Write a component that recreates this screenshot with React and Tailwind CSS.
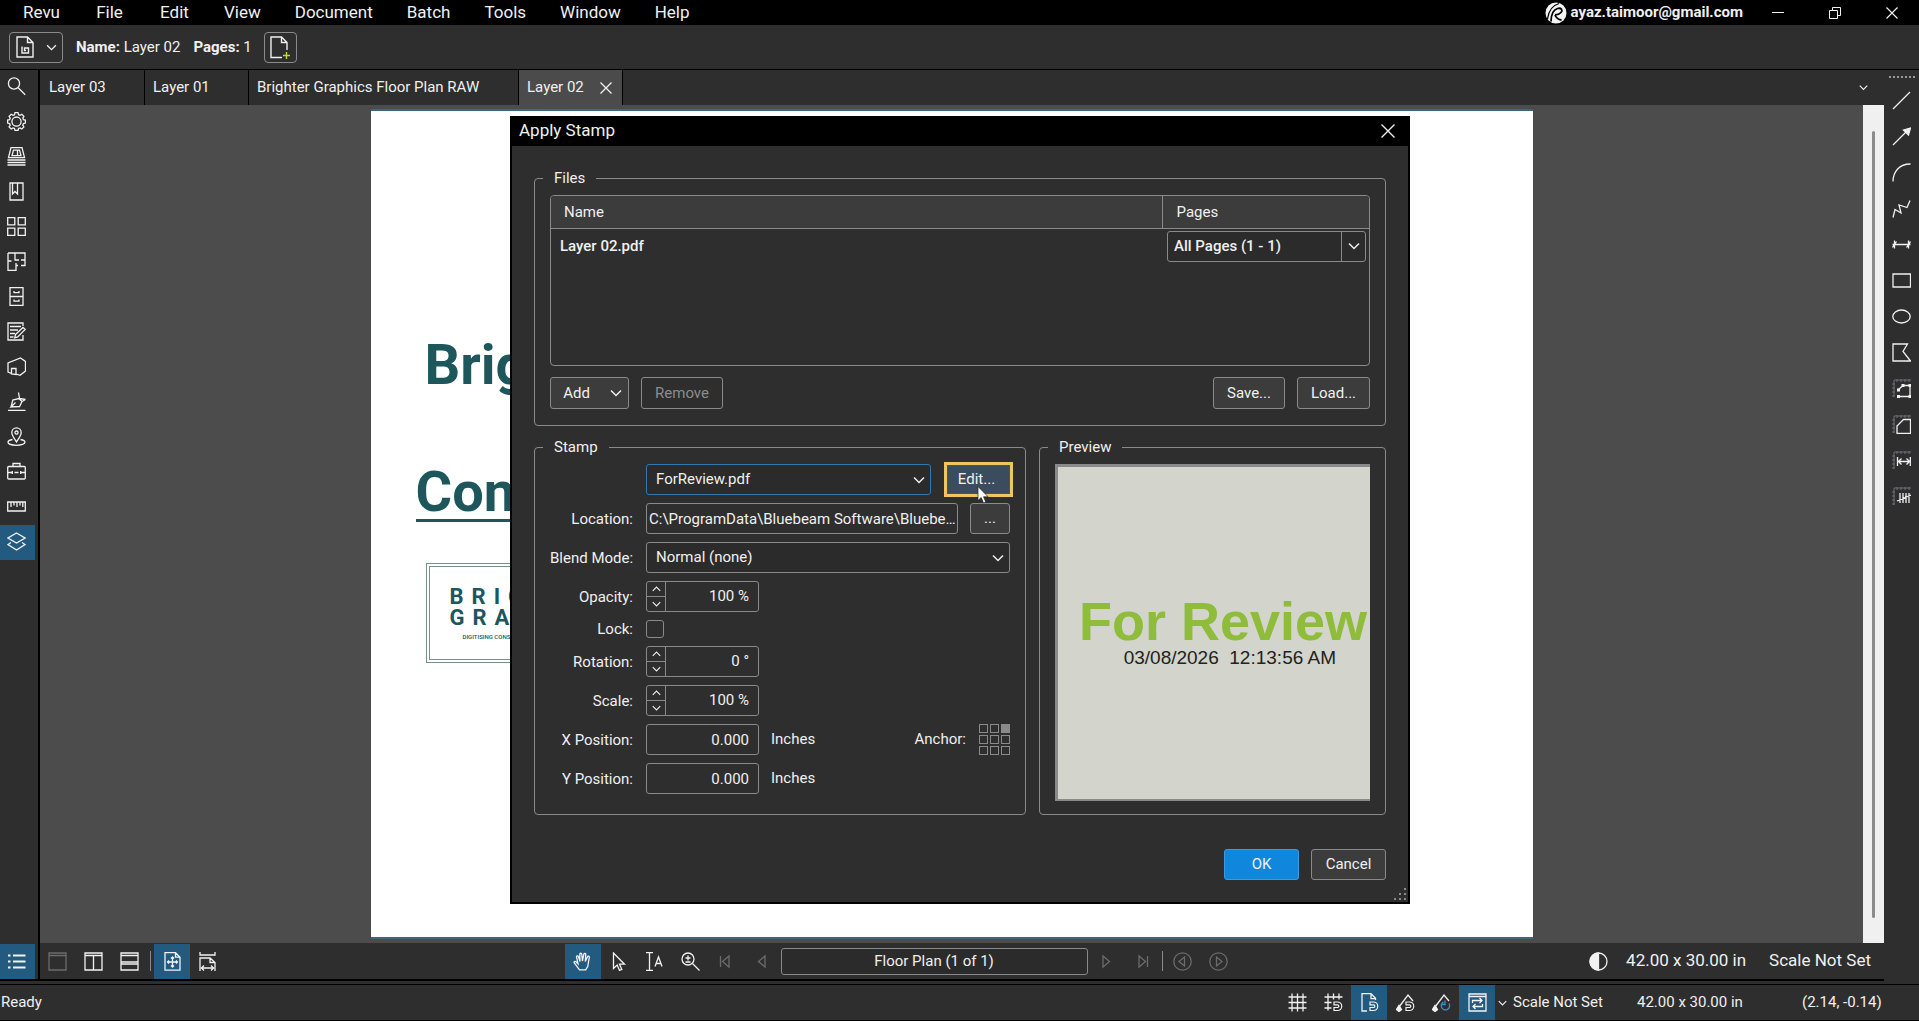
import clsx from 'clsx';
import { useState } from 'react';

const MENUS = ['Revu', 'File', 'Edit', 'View', 'Document', 'Batch', 'Tools', 'Window', 'Help'];

const Icon = ({ children, className = '' }) => (
  <svg
    viewBox="0 0 19 19"
    className={clsx('h-[19px] w-[19px] shrink-0', className)}
    fill="none"
    stroke="currentColor"
    strokeWidth="1.3"
    aria-hidden="true"
  >
    {children}
  </svg>
);

const Chevron = ({ className = '', up = false }) => (
  <svg viewBox="0 0 12 8" className={clsx('shrink-0', className)} fill="none" stroke="currentColor" strokeWidth="1.5" aria-hidden="true">
    <path d={up ? 'M1 6.5 6 1.5l5 5' : 'M1 1.5 6 6.5l5-5'} />
  </svg>
);

const PANELS = [
  { name: 'Search', icon: <><circle cx="7" cy="6.5" r="5.6" /><path d="m11.2 10.7 7 7" /></> },
  {
    name: 'Properties',
    icon: (
      <>
        <path d="M8 .7h3l.5 2 1.5.6 1.8-1.1 2.1 2.1-1.1 1.8.6 1.5 2 .5v3l-2 .5-.6 1.5 1.1 1.8-2.1 2.1-1.8-1.1-1.5.6-.5 2H8l-.5-2-1.5-.6-1.8 1.1-2.1-2.1 1.1-1.8-.6-1.5-2-.5v-3l2-.5.6-1.5-1.1-1.8 2.1-2.1L6 3.3l1.5-.6z" />
        <circle cx="9.5" cy="9.6" r="4.6" />
      </>
    ),
  },
  { name: 'File Access', icon: <><path d="M4 .7h11l2.5 10h-16zM6.5 3.2h6l1.5 5.5H5zM10.5 3.5v5M.5 13h18M.5 15.5h18M.5 18h18" /></> },
  { name: 'Bookmarks', icon: <><path d="M3 1h13v17H3zM5.5 1v11L8 9.5l2.5 2.5V1" /></> },
  { name: 'Thumbnails', icon: <><path d="M.7.7h7.1v7.1H.7zM11.2.7h7.1v7.1h-7.1zM.7 11.2h7.1v7.1H.7zM11.2 11.2h7.1v7.1h-7.1z" /></> },
  { name: 'Spaces', icon: <><path d="M1 1h17v12.5h-4M8 1v7h4M1 9h3.5M1 1v17.5h8v-5h2M9 11v2.5M14 8h4" /></> },
  { name: 'Sets', icon: <><path d="M3 .7h13v17.6H3zM3 9.5h13M7 4v1.7h5V4M7 12.5v1.7h5v-1.7" /></> },
  { name: 'Markups', icon: <><path d="M16 4V1H1v17h15v-5M3 4.5h11M3 8h8M3 11.5h5M3 15h3.5M8.5 12.5l7.5-7 2.2 2-7.5 7.5-3 .8z" /></> },
  { name: '3D Model Tree', icon: <><path d="M4.5 16.5 1 15V6l12.500-5 5 3.500V14l-5.500 4.300-4-1.300M4.500 17v-5.500h4.500v6z" /></> },
  { name: 'Signatures', icon: <><path d="M1 18.3h17.5M4 15l1.8-7 6-1.5 3.2 3-2.4 5-8.6.5 4.5-4.5M11.5.5l1 6M12.5 6.5l6 1M15 9.5l3.5-2" /></> },
  { name: 'Places', icon: <><path d="M9.5 15C7 11 4.8 8.6 4.8 5.6a4.7 4.7 0 0 1 9.4 0C14.2 8.6 12 11 9.5 15z" /><circle cx="9.5" cy="5.6" r="1.6" /><path d="M5.5 12.5C2.5 13 1 14 1 15.3 1 17 4.8 18.3 9.5 18.3S18 17 18 15.3c0-1.3-1.5-2.3-4.5-2.8" /></> },
  { name: 'Tool Chest', icon: <><rect x=".7" y="4.5" width="17.6" height="12.5" rx="1" /><path d="M6 4.5v-3h7v3M.7 10.5h4.5M7.5 10.5h4M13.8 10.5h4.5M5.3 9v3M13.7 9v3" /></> },
  { name: 'Measurements', icon: <><path d="M.7 5h17.6v9H.7zM4 5v5M7 5v3.5M10 5v5M13 5v3.5M15.8 5v5" /></> },
  { name: 'Layers', active: true, icon: <><path d="m9.5 1 8.5 5-8.5 5L1 6z" /><path d="m4 10.5-3 2L9.500 18l8.500-5.500-3-2" /></> },
];

const ruler = <path d="M2 1v17M2 1h17M5 0v3M9 0v3M13 0v3M17 0v3M0 5h3M0 9h3M0 13h3M0 17h3" stroke="#6e6c78" strokeWidth="1" />;

const DRAW_TOOLS = [
  { name: 'Line', icon: <path d="M1 18 18 1" /> },
  { name: 'Arrow', icon: <><path d="M1 18 14 5" /><path d="m18.5 1-2 7-5-5z" fill="currentColor" /></> },
  { name: 'Arc', icon: <path d="M1 18.5C1 9 7 1 18.5 1" /> },
  { name: 'Polyline', icon: <path d="m1 18.5 2-8 6 3.5-2-8 8 2.5 3-7" /> },
  { name: 'Dimension', icon: <path d="M2.5 5.5v8M16.5 5.5v8M.5 9.5h18M.5 12.5l4-6M14.5 12.5l4-6" /> },
  { name: 'Rectangle', icon: <path d="M1 3h17.5v13H1z" /> },
  { name: 'Ellipse', icon: <ellipse cx="9.5" cy="9.5" rx="8.7" ry="6.5" /> },
  { name: 'Polygon', icon: <path d="M1 1h14.5L11 8.5l7.5 9.5H1z" /> },
  {
    name: 'Perimeter',
    icon: (
      <>
        {ruler}
        <path d="m6 11 5-4.5h7v11H6" />
        <path d="M5 9.5h3v3H5zM9.5 5h3v3h-3zM16.5 5H19v3h-2.5zM5 16h3v3H5zM16.5 16H19v3h-2.5z" fill="currentColor" stroke="none" />
      </>
    ),
  },
  { name: 'Area', icon: <>{ruler}<path d="M5 18.3V11l6.5-6.5h7v13.8z" /></> },
  { name: 'Length', icon: <>{ruler}<path d="M5.5 6v9M18.3 6v9M6.5 10.5h11M9.5 7.5l-3 3 3 3M14.5 7.5l3 3-3 3" /></> },
  { name: 'Count', icon: <>{ruler}<path d="M8 6v10M11 6v10M14 6v10M17 6v10M5 14l14-6" /></> },
];

const magnet = <path d="M10 9h3.5a4 4 0 0 1 0 8.5H10v-3h3.5a1.3 1.3 0 0 0 0-2.6H10z" strokeWidth="1.2" />;

const triangle = {
  left: 'M12 4v11L5.5 9.5z',
  right: 'M7 4v11l6.5-5.5z',
};

const BarButton = ({ label, active, dim, children, className = 'w-9' }) => (
  <button
    type="button"
    aria-label={label}
    className={clsx(
      'flex h-[35px] shrink-0 items-center justify-center',
      active && 'bg-[#235a80]',
      dim ? 'text-[#6b6b6b]' : 'text-[#f2f2f2]',
      className
    )}
  >
    <Icon>{children}</Icon>
  </button>
);

const BUTTON_TONES = {
  normal: 'rounded-[3px] border-[#8a8a8a] bg-[#3c3c3c] disabled:bg-transparent disabled:text-[#8c8c8c]',
  primary: 'rounded-[3px] border-[#3c9be0] bg-[#0f87dc]',
  highlighted: 'border-[#3f566b] bg-[#3a4c5e] ring-3 ring-[#eec660]',
};

const Button = ({ children, tone = 'normal', className = '', ...props }) => (
  <button type="button" className={clsx('flex items-center justify-center border', BUTTON_TONES[tone], className)} {...props}>
    {children}
  </button>
);

const Select = ({ id, label, options, className = '', selectClass = '', split = false }) => (
  <div className={clsx('relative h-[31px]', className)}>
    <select
      id={id}
      aria-label={label}
      className={clsx('h-full w-full appearance-none rounded-[3px] border bg-[#2b2b2b] outline-none', selectClass)}
    >
      {options.map((option) => (
        <option key={option}>{option}</option>
      ))}
    </select>
    <span
      className={clsx(
        'pointer-events-none absolute inset-y-0 right-0 flex w-[25px] items-center justify-center',
        split && 'border-l border-[#8a8a8a]'
      )}
    >
      <Chevron className="h-2 w-3" />
    </span>
  </div>
);

const Spinner = ({ id, value }) => (
  <div className="flex h-[31px] w-[113px] overflow-hidden rounded-[3px] border border-[#8a8a8a]">
    <div className="flex w-[19px] shrink-0 flex-col border-r border-[#8a8a8a]">
      <button type="button" aria-label={`Increase ${id}`} className="flex flex-1 items-center justify-center border-b border-[#8a8a8a]">
        <Chevron up className="h-1.5 w-[9px]" />
      </button>
      <button type="button" aria-label={`Decrease ${id}`} className="flex flex-1 items-center justify-center">
        <Chevron className="h-1.5 w-[9px]" />
      </button>
    </div>
    <input id={id} type="text" defaultValue={value} className="w-full min-w-0 bg-transparent pr-[9px] text-right outline-none" />
  </div>
);

const Group = ({ title, children, className = '' }) => (
  <fieldset className={clsx('min-w-0 rounded-[4px] border border-[#8a8a8a] px-[15px] pt-[7px]', className)}>
    <legend className="-ml-[7px] px-[11px] leading-5">{title}</legend>
    {children}
  </fieldset>
);

const Row = ({ label, htmlFor, children }) => (
  <>
    <label htmlFor={htmlFor} className="self-center text-right leading-[18px] whitespace-nowrap">
      {label}
    </label>
    <div className="flex min-w-0 items-center">{children}</div>
  </>
);

const numberInput = 'h-[31px] w-[113px] rounded-[3px] border border-[#8a8a8a] bg-transparent pr-[9px] text-right outline-none';

const ApplyStampDialog = () => {
  const [anchor, setAnchor] = useState(2);

  return (
    <div className="fixed inset-0 flex items-center justify-center pb-px pl-px">
      <section
        role="dialog"
        aria-label="Apply Stamp"
        className="relative w-[900px] border-2 border-t-0 border-black bg-[#2e2e2e] text-[15px] text-[#f0f0f0]"
      >
        <header className="flex h-[30px] items-center justify-between bg-black pr-[13px] pl-[7px]">
          <h1 className="text-[17px]">Apply Stamp</h1>
          <button type="button" aria-label="Close dialog">
            <svg viewBox="0 0 14 14" className="h-3.5 w-3.5" stroke="currentColor" strokeWidth="1.4">
              <path d="m.5.5 13 13M13.5.5l-13 13" />
            </svg>
          </button>
        </header>

        <div className="px-[22px] pt-[22px] pb-[22px]">
          <Group title="Files" className="pb-4">
            <div className="h-[171px] overflow-hidden rounded-[4px] border border-[#8a8a8a]">
              <table className="w-full table-fixed border-collapse text-left">
                <thead>
                  <tr className="h-8 border-b border-[#8a8a8a] bg-[#3c3c3c]">
                    <th className="pl-[13px] font-normal">Name</th>
                    <th className="w-[207px] border-l border-[#8a8a8a] pl-[14px] font-normal">Pages</th>
                  </tr>
                </thead>
                <tbody>
                  <tr className="font-medium">
                    <td className="pt-0.5 pl-[9px]">Layer 02.pdf</td>
                    <td className="pt-0.5 pr-[3px] pl-[5px]">
                      <Select
                        label="Pages"
                        options={['All Pages (1 - 1)']}
                        split
                        selectClass="border-[#8a8a8a] pl-1.5"
                      />
                    </td>
                  </tr>
                </tbody>
              </table>
            </div>
            <div className="mt-[11px] flex h-8 gap-3">
              <Button className="w-[79px] gap-5 pl-1.5">
                Add
                <Chevron className="h-2 w-3" />
              </Button>
              <Button className="w-[82px]" disabled>Remove</Button>
              <Button className="ml-auto w-[72px]">Save...</Button>
              <Button className="w-[73px]">Load...</Button>
            </div>
          </Group>

          <div className="mt-[11px] flex gap-[13px]">
            <Group title="Stamp" className="flex-1 pb-5">
              <div className="grid grid-cols-[83px_minmax(0,1fr)] gap-x-[13px] gap-y-2">
                <Row label="" htmlFor="stamp">
                  <Select
                    id="stamp"
                    label="Stamp"
                    options={['ForReview.pdf']}
                    className="flex-1"
                    selectClass="border-[#2f79b0] pl-[9px]"
                  />
                  <div className="relative ml-4">
                    <Button tone="highlighted" className="h-[29px] w-[63px] pr-1">
                      Edit...
                    </Button>
                    <svg viewBox="0 0 12 18" className="pointer-events-none absolute top-[21px] left-[30px] h-[18px] w-3" fill="#fff" stroke="#222" strokeWidth=".7">
                      <path d="M1 .5v14l3.2-3 2.3 5.5 2.3-1-2.3-5.3H11z" />
                    </svg>
                  </div>
                </Row>
                <Row label="Location:" htmlFor="location">
                  <input
                    id="location"
                    type="text"
                    readOnly
                    value="C:\ProgramData\Bluebeam Software\Bluebe…"
                    className="h-[31px] min-w-0 flex-1 rounded-[3px] border border-[#8a8a8a] bg-transparent pl-0.5 outline-none"
                  />
                  <Button className="ml-3 h-[31px] w-10" aria-label="Browse">...</Button>
                </Row>
                <Row label="Blend Mode:" htmlFor="blend">
                  <Select id="blend" options={['Normal (none)']} className="flex-1" selectClass="border-[#8a8a8a] pl-[9px]" />
                </Row>
                <Row label="Opacity:" htmlFor="opacity">
                  <Spinner id="opacity" value="100 %" />
                </Row>
                <Row label="Lock:" htmlFor="lock">
                  <input id="lock" type="checkbox" className="h-[18px] w-[18px] appearance-none rounded-[3px] border border-[#8a8a8a] checked:bg-[#0f87dc]" />
                </Row>
                <Row label="Rotation:" htmlFor="rotation">
                  <Spinner id="rotation" value="0 °" />
                </Row>
                <Row label="Scale:" htmlFor="scale">
                  <Spinner id="scale" value="100 %" />
                </Row>
                <Row label="X Position:" htmlFor="x-position">
                  <input id="x-position" type="text" defaultValue="0.000" className={numberInput} />
                  <span className="ml-3">Inches</span>
                  <span className="ml-auto">Anchor:</span>
                  <div className="ml-[13px] grid grid-cols-3 gap-0.5">
                    {Array.from({ length: 9 }, (_, i) => (
                      <button
                        key={i}
                        type="button"
                        aria-label={`Anchor ${i + 1}`}
                        onClick={() => setAnchor(i)}
                        className={clsx('h-[9px] w-[9px] border border-[#8a8a8a]', anchor === i && 'bg-[#8a8a8a]')}
                      />
                    ))}
                  </div>
                </Row>
                <Row label="Y Position:" htmlFor="y-position">
                  <input id="y-position" type="text" defaultValue="0.000" className={numberInput} />
                  <span className="ml-3">Inches</span>
                </Row>
              </div>
            </Group>

            <Group title="Preview" className="w-[347px] pb-[13px]">
              <div className="flex h-[337px] flex-col items-end justify-center overflow-hidden border-t-3 border-b-2 border-l-3 border-[#8a8a8a] bg-[#d3d4cb] font-['Liberation_Sans',Arial,sans-serif] whitespace-nowrap">
                <p className="pr-[3px] text-[54px] leading-[50px] font-bold text-[#8fbc3b]">For Review</p>
                <p className="pr-[34px] text-[19px] leading-6 whitespace-pre text-[#222]">03/08/2026  12:13:56 AM</p>
              </div>
            </Group>
          </div>

          <div className="mt-[34px] flex h-[31px] justify-end gap-3">
            <Button tone="primary" className="w-[75px]">OK</Button>
            <Button className="w-[75px]">Cancel</Button>
          </div>
        </div>

        <svg viewBox="0 0 14 14" className="absolute right-px bottom-px h-3.5 w-3.5" fill="#8a8a8a" aria-hidden="true">
          <path d="M11 1h2v2h-2zM6 6h2v2H6zM11 6h2v2h-2zM1 11h2v2H1zM6 11h2v2H6zM11 11h2v2h-2z" />
        </svg>
      </section>
    </div>
  );
};

const TitleBar = () => (
  <header className="flex h-[25px] shrink-0 items-center justify-between bg-black">
    <nav className="flex pl-1.5 text-[17px]">
      {MENUS.map((menu) => (
        <button key={menu} type="button" className="min-w-[65px] px-[17px]">
          {menu}
        </button>
      ))}
    </nav>
    <div className="flex items-center text-[15px] font-bold">
      <svg viewBox="0 0 22 22" className="mr-1 h-[22px] w-[22px]" aria-hidden="true">
        <circle cx="11" cy="11" r="10.5" fill="#f4f4f4" />
        <path d="M2.5 17C3.5 9 7 3.5 14 1.5" fill="none" stroke="#000" strokeWidth="1.3" />
        <path d="M6 19.5C6 13 8 8 12.5 6.5c4-1 5.5 1.8 3.5 4-1.3 1.5-3.5 2.3-6 2.3" fill="none" stroke="#000" strokeWidth="1.8" />
        <path d="M10 13c1 2.5 3 4.5 6.5 5" fill="none" stroke="#000" strokeWidth="1.8" />
      </svg>
      <span>ayaz.taimoor@gmail.com</span>
      <button type="button" aria-label="Minimize" className="ml-7 p-px">
        <svg viewBox="0 0 12 12" className="h-3 w-3" stroke="currentColor"><path d="M0 5.5h12" /></svg>
      </button>
      <button type="button" aria-label="Restore" className="ml-[43px] p-px">
        <svg viewBox="0 0 12 12" className="h-3 w-3" stroke="currentColor" fill="none"><path d="M.5 3.5h8v8h-8zM3.5 3.5v-3h8v8h-3" /></svg>
      </button>
      <button type="button" aria-label="Close" className="mr-5 ml-[43px] p-px">
        <svg viewBox="0 0 12 12" className="h-3 w-3" stroke="currentColor" strokeWidth="1.2"><path d="m.5.5 11 11M11.5.5l-11 11" /></svg>
      </button>
    </div>
  </header>
);

const FileBar = () => (
  <div className="flex h-11 shrink-0 items-center pl-[9px] text-[15px]">
    <button type="button" aria-label="File" className="flex h-[31px] w-[54px] items-center justify-center gap-3 rounded-[4px] border border-[#8a8a8a]">
      <svg viewBox="0 0 18 22" className="h-[22px] w-[18px]" fill="none" stroke="currentColor" strokeWidth="1.4" aria-hidden="true">
        <path d="M1 1h10.5L17 6.5V21H1zM11.5 1v5.5H17M6 10.500V17h6.500v-5H8.500v2.500H10" />
      </svg>
      <Chevron className="h-[7px] w-[11px]" />
    </button>
    <span className="ml-[13px]"><b>Name:</b> Layer 02</span>
    <span className="ml-[13px]"><b>Pages:</b> 1</span>
    <button type="button" aria-label="Add page" className="ml-3 flex h-[31px] w-[33px] items-center justify-center rounded-[4px] border border-[#8a8a8a]">
      <svg viewBox="0 0 20 23" className="h-[23px] w-5" fill="none" stroke="currentColor" strokeWidth="1.4" aria-hidden="true">
        <path d="M12 21.5H1V1h10.5L17 6.5V14M11.5 1v5.5H17" />
        <path d="M16.5 16v7M13 19.5h7" stroke="#c5d92e" />
      </svg>
    </button>
  </div>
);

const PanelStrip = () => (
  <aside className="flex w-[40px] shrink-0 flex-col border-r-2 border-black">
    {PANELS.map(({ name, icon, active }) => (
      <BarButton key={name} label={name} active={active} className="w-[35px] pr-0.5 pb-0.5">{icon}</BarButton>
    ))}
    <BarButton label="Panel list" active className="mt-auto w-[35px] pr-0.5">
      <path d="M6 3.5h12.5M6 9.5h12.5M6 15.5h12.5" strokeWidth="2" />
      <path d="M1 3.5h2.5M1 9.5h2.5M1 15.5h2.5" strokeWidth="2" />
    </BarButton>
  </aside>
);

const Tabs = () => (
  <div className="flex h-[35px] shrink-0 items-stretch text-[15px]">
    <button type="button" className="w-[105px] border-r border-black pl-[9px] text-left">Layer 03</button>
    <button type="button" className="w-[104px] border-r border-black pl-2 text-left">Layer 01</button>
    <button type="button" className="w-[270px] border-r border-black pl-2 text-left">Brighter Graphics Floor Plan RAW</button>
    <div className="flex w-[104px] items-center justify-between border-r border-black bg-[#4b4b4b] pr-2.5 pl-2">
      <button type="button">Layer 02</button>
      <button type="button" aria-label="Close tab">
        <svg viewBox="0 0 12 12" className="h-3 w-3" stroke="currentColor" strokeWidth="1.3"><path d="m.5.5 11 11M11.5.5l-11 11" /></svg>
      </button>
    </div>
    <button type="button" aria-label="All tabs" className="mr-4 ml-auto">
      <Chevron className="h-[7px] w-[9px]" />
    </button>
  </div>
);

const LogoLine = ({ text }) => (
  <p className="flex gap-2 text-[22px] leading-[21px] font-bold">
    {text.split('').map((letter) => (
      <span key={letter}>{letter}</span>
    ))}
  </p>
);

const DrawingPage = () => (
  <div className="flex min-h-0 flex-1">
    <div className="flex flex-1 justify-center bg-[#4c4c4c] py-1">
      <article className="aspect-[7/5] h-full overflow-hidden border-y-2 border-[#41687a] bg-white pl-[45px] text-[#1d575c]">
        <h2 className="mt-[221px] pl-[9px] text-[56px] leading-[66px] font-bold">Brig</h2>
        <h2 className="mt-[68px] w-[400px] border-b-3 border-[#1d575c] text-[56px] leading-[53px] font-bold">Con</h2>
        <div className="mt-[41px] ml-[10px] w-[300px] border border-[#76908f] p-0.5">
          <div className="h-[94px] border border-[#76908f] pt-[19px] pl-5">
            <LogoLine text="BRIG" />
            <LogoLine text="GRAP" />
            <p className="mt-1.5 pl-[13px] text-[6px] leading-[6px] font-medium">DIGITISING CONS</p>
          </div>
        </div>
      </article>
    </div>
    <div className="flex w-[21px] justify-center bg-[#f0f0f0] pt-[26px] pb-[25px]">
      <div className="w-[3px] rounded-full bg-[#8c8c8c]" />
    </div>
  </div>
);

const NavBar = () => (
  <div className="flex h-9 shrink-0 items-center text-[17px]">
    <div className="flex items-center">
      <BarButton label="Single view" dim className="w-[35px]"><path d="M1 1h17v17H1zM1 3.5h17" /></BarButton>
      <BarButton label="Split vertical"><path d="M1 1h17v17H1zM1 3.5h17M9.5 3.5V18" /></BarButton>
      <BarButton label="Split horizontal"><path d="M1 1h17v17H1zM1 3.5h17M1 10h17M1 12h17" /></BarButton>
      <div className="mx-[3px] h-5 w-px bg-[#8a8a8a]" />
      <BarButton label="Fit page" active>
        <path d="M2 .7h10.5L17 5.2v13H2zM12.5.7v4.500H17M9.500 5v10M4.500 10h10M8 6.500 9.500 5 11 6.500M8 13.500 9.500 15l1.500-1.500M6 8.500 4.500 10 6 11.500M13 8.500l1.500 1.500-1.500 1.500" />
      </BarButton>
      <BarButton label="Fit width" className="w-[35px]">
        <path d="M2 0v3h15V0M2 19V6h10l5 4.5V19M12 6v4.5h5M3 16h13M6 13.5 3.5 16 6 18.5M13 13.5l2.5 2.5-2.5 2.5" />
      </BarButton>
    </div>
    <div className="flex flex-1 items-center justify-center pr-1">
      <BarButton label="Pan" active>
        <path d="M6.5 17.8 1.3 11c-.8-1.3.7-2.2 1.7-1.300l2 2L3.500 5c-.2-1.300 1.500-1.700 1.900-.4L7 9.500 6.800 2.300c0-1.400 1.900-1.400 2 0L9.400 9l1.500-6.800c.3-1.200 2-.9 1.900.3L12.300 9.500l2.200-4.800c.5-1 2-.5 1.800.7l-1.600 9.100-2 3.300z" />
      </BarButton>
      <BarButton label="Select"><path d="M4.5 1v15.5l3.7-3.4 2.3 5.3 2.3-1-2.3-5.2h5z" /></BarButton>
      <BarButton label="Select text">
        <path d="M1 .7h7M4.5.7v17.6M1 18.3h7M10 14.5 13.500 5 17 14.500M11.200 11.500h4.600" />
      </BarButton>
      <BarButton label="Zoom"><circle cx="7" cy="7" r="6" /><path d="m11.5 11.5 7 7M4.5 6h5M7 3.500v5M4.500 10h5" /></BarButton>
      <BarButton label="First page" dim><path d="M3.5 4v11" /><path d={triangle.left} /></BarButton>
      <BarButton label="Previous page" dim><path d={triangle.left} /></BarButton>
      <input
        type="text"
        aria-label="Page"
        defaultValue="Floor Plan (1 of 1)"
        className="h-[27px] w-[307px] rounded-[3px] border border-[#8a8a8a] bg-[#2b2b2b] text-center text-[15px] outline-none"
      />
      <BarButton label="Next page" dim><path d={triangle.right} /></BarButton>
      <BarButton label="Last page" dim><path d="M15.5 4v11" /><path d={triangle.right} /></BarButton>
      <div className="mx-[2px] h-5 w-px bg-[#8a8a8a]" />
      <BarButton label="Previous view" dim><circle cx="9.5" cy="9.5" r="8.7" /><path d="M11.5 5v9L6 9.5z" /></BarButton>
      <BarButton label="Next view" dim><circle cx="9.5" cy="9.5" r="8.7" /><path d="M7.5 5v9L13 9.500z" /></BarButton>
    </div>
    <BarButton label="Dim page"><circle cx="9.5" cy="9.5" r="8.5" /><path d="M9.5 1a8.5 8.5 0 0 0 0 17z" fill="currentColor" /></BarButton>
    <span className="ml-[10px]">42.00 x 30.00 in</span>
    <span className="mr-[13px] ml-[23px]">Scale Not Set</span>
  </div>
);

const DrawStrip = () => (
  <aside className="flex w-[35px] shrink-0 flex-col items-center pt-1.5">
    <div className="h-0.5 w-[26px] border-t-2 border-dotted border-[#9a9a9a]" />
    <div className="mt-1 flex flex-col">
      {DRAW_TOOLS.map(({ name, icon }) => (
        <button key={name} type="button" aria-label={name} className="flex h-9 w-[35px] items-center justify-center">
          <Icon>{icon}</Icon>
        </button>
      ))}
    </div>
  </aside>
);

const StatusBar = () => (
  <footer className="flex h-9 shrink-0 items-center border-b border-black text-[15px]">
    <span className="pl-px">Ready</span>
    <div className="ml-auto flex items-center">
      <BarButton label="Show grid"><path d="M4 .5v18M9.5.5v18M15 .5v18M.5 4h18M.5 9.5h18M.5 15h18" /></BarButton>
      <BarButton label="Snap to grid"><path d="M4 .5v17M9.5.5v6M15 .5v6M.5 4h18M.5 9.500h7M.5 15h7" />{magnet}</BarButton>
      <BarButton label="Snap to content" active><path d="M7 18H2V.7h9l4.5 4.5V7M11 .7v5h4.500" />{magnet}</BarButton>
      <BarButton label="Snap to markup"><path d="m3 14 9-12 5 6" /><path d="M.5 16.5 3 12.500l2.500 4-2.500 2z" fill="currentColor" />{magnet}</BarButton>
      <BarButton label="Reuse">
        <path d="m3 14 9-12 5 6" />
        <path d="M.5 16.5 3 12.500l2.500 4-2.500 2z" fill="currentColor" />
        <path d="M17 10.5a4.2 4.2 0 1 1-5.5-1.500M13 7.500v4H9" stroke="#3c8fc4" />
      </BarButton>
      <BarButton label="Sync views" active>
        <path d="M1 1h17v17H1zM1 3.5h17M4.500 10V7.500H14M11.500 5l2.500 2.500-2.500 2.500M14.500 11v2.500H5M7.500 11 5 13.500 7.500 16" />
      </BarButton>
      <Chevron className="mx-[3px] h-1.5 w-[9px]" />
      <span className="ml-[3px] w-[124px]">Scale Not Set</span>
      <span className="w-[165px]">42.00 x 30.00 in</span>
      <span className="w-[117px]">(2.14, -0.14)</span>
    </div>
  </footer>
);

const App = () => (
  <div className="flex h-screen flex-col overflow-hidden bg-[#2e2e2e] font-['Roboto','Liberation_Sans',sans-serif] text-[#f0f0f0]">
    <TitleBar />
    <FileBar />
    <div className="flex min-h-0 flex-1 border-y border-black">
      <div className="mb-[3px] flex min-w-0 flex-1 border-b-2 border-black">
        <PanelStrip />
        <main className="flex min-w-0 flex-1 flex-col">
          <Tabs />
          <DrawingPage />
          <NavBar />
        </main>
      </div>
      <DrawStrip />
    </div>
    <StatusBar />
    <ApplyStampDialog />
  </div>
);

export default App;
